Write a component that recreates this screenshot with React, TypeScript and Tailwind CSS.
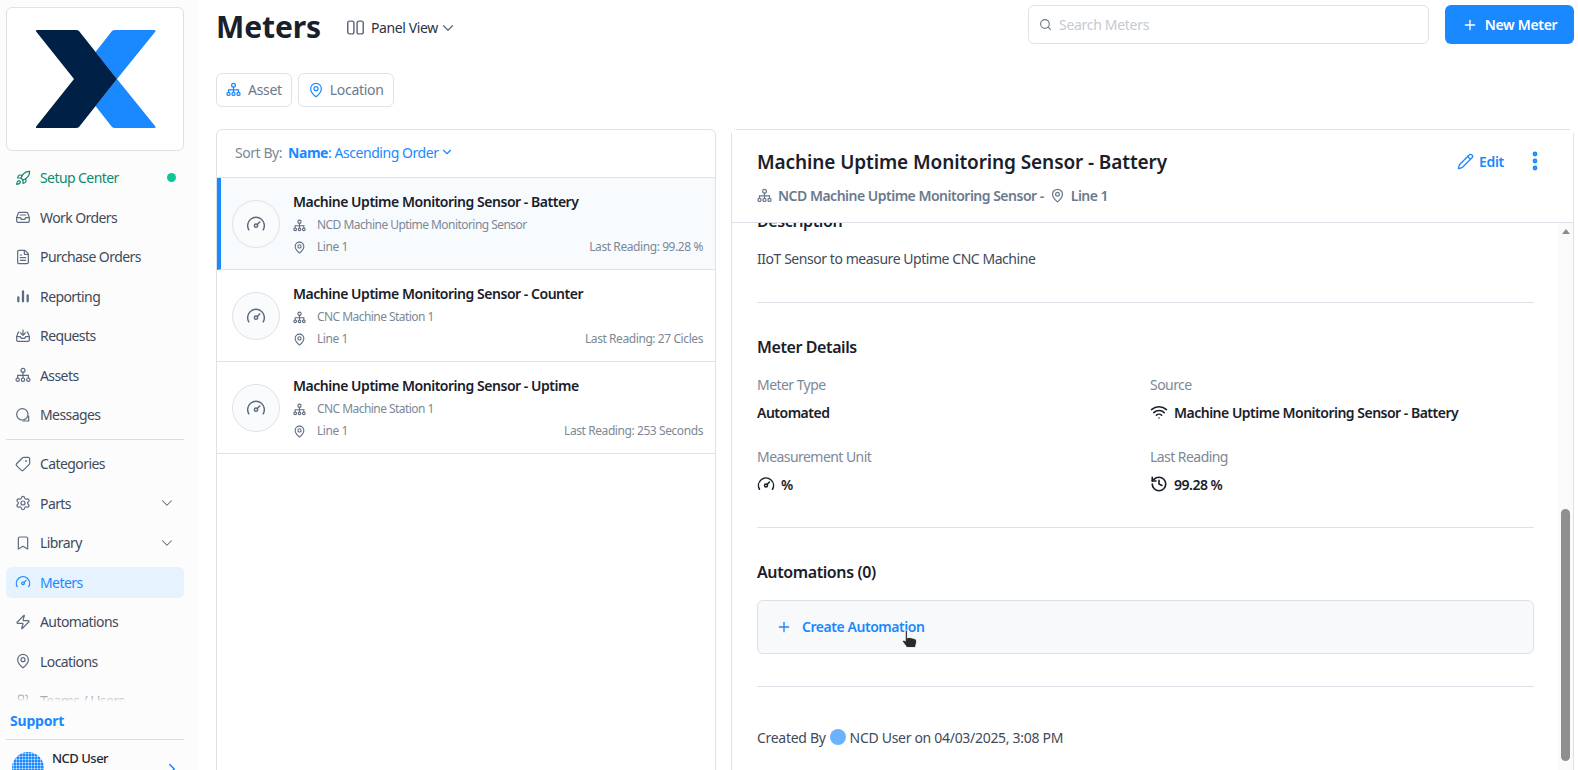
import { Bookmark, ChevronDown, ChevronRight, EllipsisVertical, FileText, History, MapPin, Pencil, Plus, Rocket, Search, Settings, Tag, Users, Wifi, Zap } from 'lucide-react';
import type { ComponentType, ReactNode } from 'react';

const font = { fontFamily: '"Noto Sans", sans-serif' };

type IconProps = { className?: string };

function TreeIcon({ className = '' }: IconProps) {
  return (
    <svg viewBox="0 0 24 24" fill="none" stroke="currentColor" strokeWidth="2" strokeLinecap="round" className={className}>
      <circle cx="12" cy="5" r="3" />
      <circle cx="4" cy="19" r="2.5" />
      <circle cx="12" cy="19" r="2.5" />
      <circle cx="20" cy="19" r="2.5" />
      <path d="M12 8v8.5M4 16.5V12.5h16v4" />
    </svg>
  );
}

function GaugeIcon({ className = '' }: IconProps) {
  return (
    <svg viewBox="0 0 24 24" fill="none" stroke="currentColor" strokeWidth="2" strokeLinecap="round" className={className}>
      <path d="M3.34 19a10 10 0 1 1 17.32 0" />
      <circle cx="12" cy="14" r="2" />
      <path d="m13.500 12.500 3-3" />
    </svg>
  );
}

function TrayIcon({ className = '' }: IconProps) {
  return (
    <svg viewBox="0 0 24 24" fill="none" stroke="currentColor" strokeWidth="1.8" strokeLinecap="round" strokeLinejoin="round" className={className}>
      <path d="M2.500 13 5 6a1.500 1.500 0 0 1 1.400-1h11.200A1.500 1.500 0 0 1 19 6l2.500 7v5a2 2 0 0 1-2 2h-15a2 2 0 0 1-2-2z" />
      <path d="M2.500 13H8l1.500 2.500h5L16 13h5.500" />
      <path d="M8 9h8" />
    </svg>
  );
}

function RequestsIcon({ className = '' }: IconProps) {
  return (
    <svg viewBox="0 0 24 24" fill="none" stroke="currentColor" strokeWidth="1.8" strokeLinecap="round" strokeLinejoin="round" className={className}>
      <path d="M6 6H5L2.500 13v5a2 2 0 0 0 2 2h15a2 2 0 0 0 2-2v-5L19 6h-1" />
      <path d="M2.500 13H8l1.500 2.500h5L16 13h5.500" />
      <path d="M12 3v7.500M8.500 7.500l3.500 3.500 3.500-3.500" />
    </svg>
  );
}

function BarsIcon({ className = '' }: IconProps) {
  return (
    <svg viewBox="0 0 24 24" fill="none" stroke="currentColor" strokeLinecap="round" className={`${className} stroke-[3.4]!`}>
      <path d="M5 20v-6M12 20V5M19 20v-9" />
    </svg>
  );
}

function ChatIcon({ className = '' }: IconProps) {
  return (
    <svg viewBox="0 0 24 24" fill="none" stroke="currentColor" strokeWidth="1.8" strokeLinecap="round" strokeLinejoin="round" className={className}>
      <circle cx="11" cy="11" r="8.500" />
      <path d="M20.500 13.500V21H12" />
    </svg>
  );
}

function FlipTag({ className = '' }: IconProps) {
  return <Tag className={`-scale-x-100 ${className}`} />;
}

function Dither({ id, size, opacity = 1 }: { id: string; size: number; opacity?: number }) {
  return (
    <svg width={size} height={size} viewBox="0 0 32 32" className="shrink-0" style={{ opacity }}>
      <defs>
        <pattern id={id} width="3" height="3" patternUnits="userSpaceOnUse">
          <rect width="3" height="3" fill="#1a88ff" />
          <path d="M1.500 0.300 2.700 1.500 1.500 2.700 0.300 1.500Z" fill="#ffffff" opacity="0.8" />
        </pattern>
      </defs>
      <circle cx="16" cy="16" r="16" fill={`url(#${id})`} />
    </svg>
  );
}

type NavItem = { label: string; icon: ComponentType<IconProps>; chevron?: boolean; active?: boolean };

const navTop: NavItem[] = [
  { label: 'Work Orders', icon: TrayIcon },
  { label: 'Purchase Orders', icon: FileText },
  { label: 'Reporting', icon: BarsIcon },
  { label: 'Requests', icon: RequestsIcon },
  { label: 'Assets', icon: TreeIcon },
  { label: 'Messages', icon: ChatIcon },
];

const navBottom: NavItem[] = [
  { label: 'Categories', icon: FlipTag },
  { label: 'Parts', icon: Settings, chevron: true },
  { label: 'Library', icon: Bookmark, chevron: true },
  { label: 'Meters', icon: GaugeIcon, active: true },
  { label: 'Automations', icon: Zap },
  { label: 'Locations', icon: MapPin },
  { label: 'Teams / Users', icon: Users },
];

function NavRow({ item }: { item: NavItem }) {
  const Icon = item.icon;
  return (
    <div className={`mb-[8.5px] flex h-[31px] items-center rounded-md pl-[9px] pr-[8px] text-[14px] tracking-[-0.58px] ${item.active ? 'bg-[#e6f3ff] text-[#1a88ff]' : 'text-[#3f4a5a]'}`}>
      <Icon className={`h-4 w-4 stroke-[1.8] ${item.active ? 'text-[#1a88ff]' : 'text-[#5d6b7e]'}`} />
      <span className="ml-[9px] flex-1">{item.label}</span>
      {item.chevron && <ChevronDown className="h-[18px] w-[18px] stroke-[1.4] text-[#5d6b7e]" />}
    </div>
  );
}

function Sidebar() {
  return (
    <aside className="flex h-full w-[198px] shrink-0 flex-col bg-[#fcfcfd] pl-[6px] pr-[14px] pt-[7px]">
      <div className="flex h-[144px] shrink-0 items-center justify-center rounded-md border border-[#dde2e8] bg-white pl-[2px]">
        <svg viewBox="0 0 122 100" className="h-[100px] w-[122px]">
          <path d="M80 1H119Q121.500 1 120 3L82 50 120 97Q121.500 99 119 99H80Q78 99 77 98L60.500 77 82 50 60.500 23 77 2Q78 1 80 1Z" fill="#1a88ff" />
          <path d="M2 1H41Q43 1 44 2L82 50 44 98Q43 99 41 99H2Q0 99 1.500 97L39 50 1.500 3Q0 1 2 1Z" fill="#002046" />
        </svg>
      </div>
      <div className="relative mt-[11px] min-h-0 flex-1 overflow-hidden">
        <div className="mb-[8.5px] flex h-[31px] items-center pl-[9px] pr-[8px] text-[14px] tracking-[-0.58px] text-[#0f8a6a]">
          <Rocket className="h-4 w-4 stroke-[1.8]" />
          <span className="ml-[9px] flex-1">Setup Center</span>
          <span className="h-[9px] w-[9px] rounded-full bg-[#10c49a]" />
        </div>
        {navTop.map((item) => <NavRow key={item.label} item={item} />)}
        <div className="mb-[8.2px] mt-[9px] border-t border-[#d9dee5]" />
        {navBottom.map((item) => <NavRow key={item.label} item={item} />)}
        <div className="pointer-events-none absolute bottom-0 left-0 right-0 h-[18px] bg-gradient-to-b from-[#fcfcfd]/10 to-[#fcfcfd] to-60%" />
      </div>
      <div className="flex h-[30px] shrink-0 items-center pb-[7px] pl-[4px] text-[14px] font-bold tracking-[-0.2px] text-[#1a88ff]">Support</div>
      <div className="h-[31px] shrink-0 border-t border-[#d9dee5]">
        <div className="flex pl-[6px] pr-[3px] pt-[12px]">
          <Dither id="avatar-lg" size={32} />
          <div className="-mt-[3px] ml-[8px] flex-1 text-[13px] font-medium leading-[18px] tracking-[-0.5px] text-[#1f2733]">NCD User</div>
          <ChevronRight className="mt-[8px] h-[18px] w-[18px] text-[#1a88ff]" />
        </div>
      </div>
    </aside>
  );
}

type Meter = { name: string; asset: string; reading: string; active?: boolean };

const meters: Meter[] = [
  { name: 'Machine Uptime Monitoring Sensor - Battery', asset: 'NCD Machine Uptime Monitoring Sensor', reading: 'Last Reading: 99.28 %', active: true },
  { name: 'Machine Uptime Monitoring Sensor - Counter', asset: 'CNC Machine Station 1', reading: 'Last Reading: 27 Cicles' },
  { name: 'Machine Uptime Monitoring Sensor - Uptime', asset: 'CNC Machine Station 1', reading: 'Last Reading: 253 Seconds' },
];

function MeterRow({ meter }: { meter: Meter }) {
  return (
    <div className={`flex h-[92px] items-center border-b border-[#dde2e8] pr-[12px] ${meter.active ? 'border-l-4 border-l-[#1a88ff] bg-[#f8fbfe] pl-[11px]' : 'pl-[15px]'}`}>
      <div className="flex h-12 w-12 shrink-0 items-center justify-center rounded-full border border-[#dde2e8] bg-[#fafbfc]">
        <GaugeIcon className="h-5 w-5 stroke-[1.8] text-[#5d6b7e]" />
      </div>
      <div className="ml-[13px] min-w-0 flex-1 pt-[2px]">
        <div className="text-[14px] font-semibold leading-[20px] tracking-[-0.47px] text-[#1a202a]">{meter.name}</div>
        <div className="mt-[3px] flex h-[20px] items-center text-[12px] tracking-[-0.55px] text-[#7d8896]">
          <TreeIcon className="h-[13px] w-[13px] text-[#5d6b7e]" />
          <span className="ml-[11px]">{meter.asset}</span>
        </div>
        <div className="mt-[2px] flex h-[20px] items-center text-[12px] tracking-[-0.42px] text-[#7d8896]">
          <MapPin className="h-[13px] w-[13px] text-[#5d6b7e]" />
          <span className="ml-[11px] flex-1">Line 1</span>
          <span>{meter.reading}</span>
        </div>
      </div>
    </div>
  );
}

function ListPanel() {
  return (
    <section className="-mb-2 w-[500px] shrink-0 rounded-t-md border border-[#dde2e8] bg-white">
      <div className="flex h-[48px] items-center border-b border-[#dde2e8] pb-[3px] pl-[18px] text-[14px] tracking-[-0.45px]">
        <span className="text-[#7d8896]">Sort By:</span>
        <span className="ml-[6px] font-bold text-[#1a88ff]">Name</span>
        <span className="text-[#1a88ff]">: Ascending Order</span>
        <ChevronDown className="ml-[1px] h-[14px] w-[14px] text-[#1a88ff]" />
      </div>
      {meters.map((m) => <MeterRow key={m.name} meter={m} />)}
    </section>
  );
}

function Field({ label, value, icon }: { label: string; value: string; icon?: ReactNode }) {
  return (
    <div className="h-[72px]">
      <div className="flex h-[20px] items-center text-[14px] tracking-[-0.55px] text-[#7d8896]">{label}</div>
      <div className="mt-[8px] flex h-[20px] items-center gap-[6px] text-[14px] font-semibold tracking-[-0.5px] text-[#1a202a]">
        {icon}
        {value}
      </div>
    </div>
  );
}

function DetailPanel() {
  return (
    <section className="relative -mb-2 flex min-w-0 flex-1 flex-col rounded-t-md border border-[#dde2e8] bg-white">
      <header className="z-10 flex h-[93px] shrink-0 justify-between border-b border-[#dde2e8] bg-white pl-[25px] pr-[26px]">
        <div>
          <h2 className="mt-[19px] text-[19px] font-semibold leading-[26px] tracking-[-0.1px] text-[#1a202a]">Machine Uptime Monitoring Sensor - Battery</h2>
          <div className="mt-[10px] flex h-5 items-center text-[14px] font-semibold tracking-[-0.5px] text-[#6b7a8d]">
            <TreeIcon className="mr-[6px] h-[15px] w-[15px]" />
            NCD Machine Uptime Monitoring Sensor -
            <MapPin className="ml-[6px] mr-[6px] h-[15px] w-[15px]" />
            Line 1
          </div>
        </div>
        <div className="mt-[19px] flex h-6 items-center text-[#1a88ff]">
          <Pencil className="h-[17px] w-[17px] stroke-[1.8]" />
          <span className="ml-[5px] text-[14px] font-semibold tracking-[-0.3px]">Edit</span>
          <EllipsisVertical className="ml-[19px] h-6 w-6 stroke-[2.8]" />
        </div>
      </header>
      <div className="flex min-h-0 flex-1">
        <div className="min-h-0 min-w-0 flex-1 overflow-hidden pl-[25px] pr-[24px]">
          <div className="-mt-[14px]">
            <h3 className="text-[16px] font-semibold leading-[24px] tracking-[-0.4px] text-[#1a202a]">Description</h3>
            <p className="mt-[16px] text-[14px] leading-[20px] tracking-[-0.45px] text-[#3f4a5a]">IIoT Sensor to measure Uptime CNC Machine</p>
            <div className="mt-[33px] border-t border-[#dde2e8]" />
            <h3 className="mt-[32px] text-[16px] font-semibold leading-[24px] tracking-[-0.4px] text-[#1a202a]">Meter Details</h3>
            <div className="mt-[15px] grid grid-cols-[393px_1fr]">
              <Field label="Meter Type" value="Automated" />
              <Field label="Source" value="Machine Uptime Monitoring Sensor - Battery" icon={<Wifi className="h-[18px] w-[18px] stroke-[2]" />} />
              <Field label="Measurement Unit" value="%" icon={<GaugeIcon className="h-[18px] w-[18px]" />} />
              <Field label="Last Reading" value="99.28 %" icon={<History className="h-[18px] w-[18px] stroke-[2.2]" />} />
            </div>
            <div className="mt-[9px] border-t border-[#dde2e8]" />
            <h3 className="mt-[32px] text-[16px] font-semibold leading-[24px] tracking-[-0.4px] text-[#1a202a]">Automations (0)</h3>
            <div className="mt-[16px] flex h-[54px] items-center rounded-md border border-[#dde2e8] bg-[#f8f9fb] pl-[18px] text-[#1a88ff]">
              <Plus className="h-4 w-4 stroke-[2]" />
              <span className="ml-[10px] -translate-y-[1px] text-[14px] font-semibold tracking-[-0.45px]">Create Automation</span>
            </div>
            <div className="mt-[32px] border-t border-[#dde2e8]" />
            <div className="mt-[40px] flex h-5 items-center text-[14px] tracking-[-0.3px] text-[#3f4a5a]">
              Created By
              <span className="mx-[4px]"><Dither id="avatar-sm" size={16} opacity={0.85} /></span>
              NCD User on 04/03/2025, 3:08 PM
            </div>
          </div>
        </div>
        <div className="flex w-[15px] shrink-0 flex-col items-center bg-[#fafafa] pt-[6px]">
          <div className="h-0 w-0 border-x-[4px] border-b-[5px] border-x-transparent border-b-[#8a8a8a]" />
          <div className="mt-[275px] h-[252px] w-[9px] rounded-full bg-[#8f8f8f]" />
        </div>
      </div>
      {/* mouse pointer from the capture */}
      <svg viewBox="0 0 15 18" className="absolute left-[169px] top-[499px] z-20 h-[20px] w-[16px]">
        <path d="M4 1.500C4 .5 6 .5 6 1.500V8L7.500 7.500 9.500 7.800 11.500 8.300 13.500 9C14.500 9.500 14.500 11 14.500 12.500L13.500 17H5.500L1.500 11.500C1 10.500 2.500 9.500 3.500 10.500L4 11Z" fill="#2a2a2a" stroke="#ffffff" strokeWidth="0.8" />
      </svg>
    </section>
  );
}

export default function App() {
  return (
    <div className="flex h-[770px] w-full overflow-hidden bg-white" style={font}>
      <Sidebar />
      <main className="flex min-w-0 flex-1 flex-col pl-[18px] pr-[4px]">
        <div className="flex h-[49px] shrink-0 items-center">
          <div className="flex items-center pt-[5px]">
            <h1 className="w-[131px] text-[30px] font-bold leading-[36px] tracking-[-0.1px] text-[#1a202a]">Meters</h1>
            <svg viewBox="0 0 16 16" fill="none" stroke="currentColor" strokeWidth="1.4" className="mt-[1px] h-[17px] w-[17px] text-[#5d6b7e]">
              <rect x="0.700" y="2" width="5.800" height="12" rx="1.800" />
              <rect x="9.500" y="2" width="5.800" height="12" rx="1.800" />
            </svg>
            <span className="ml-[7px] mt-[1px] text-[14px] tracking-[-0.4px] text-[#2a3442]">Panel View</span>
            <ChevronDown className="ml-[1px] mt-[1px] h-[18px] w-[18px] stroke-[1.6] text-[#5d6b7e]" />
          </div>
          <div className="ml-auto flex h-[39px] w-[401px] items-center rounded-md border border-[#dde2e8] bg-white pl-[10px] text-[14px] tracking-[-0.3px] text-[#c3cad3]">
            <Search className="h-[13px] w-[13px] stroke-[2] text-[#6b7480]" />
            <span className="ml-[7px]">Search Meters</span>
          </div>
          <button className="ml-[16px] flex h-[39px] w-[129px] items-center justify-center rounded-md bg-[#1a88ff] text-[14px] font-semibold tracking-[-0.3px] text-white">
            <Plus className="h-4 w-4 stroke-[2]" />
            <span className="ml-[7px]">New Meter</span>
          </button>
        </div>
        <div className="mt-[24px] flex h-[34px] shrink-0 gap-[6px] text-[14px] tracking-[-0.3px] text-[#6b7a8d]">
          <div className="flex items-center rounded-md border border-[#dde2e8] bg-white pb-[1px] pl-[9px] pr-[9px]">
            <TreeIcon className="h-[15px] w-[15px] text-[#1a88ff]" />
            <span className="ml-[7px]">Asset</span>
          </div>
          <div className="flex items-center rounded-md border border-[#dde2e8] bg-white pb-[1px] pl-[9px] pr-[9px]">
            <MapPin className="h-4 w-4 stroke-[1.8] text-[#1a88ff]" />
            <span className="ml-[6px]">Location</span>
          </div>
        </div>
        <div className="mt-[22px] flex min-h-0 flex-1 gap-[15px]">
          <ListPanel />
          <DetailPanel />
        </div>
      </main>
    </div>
  );
}
